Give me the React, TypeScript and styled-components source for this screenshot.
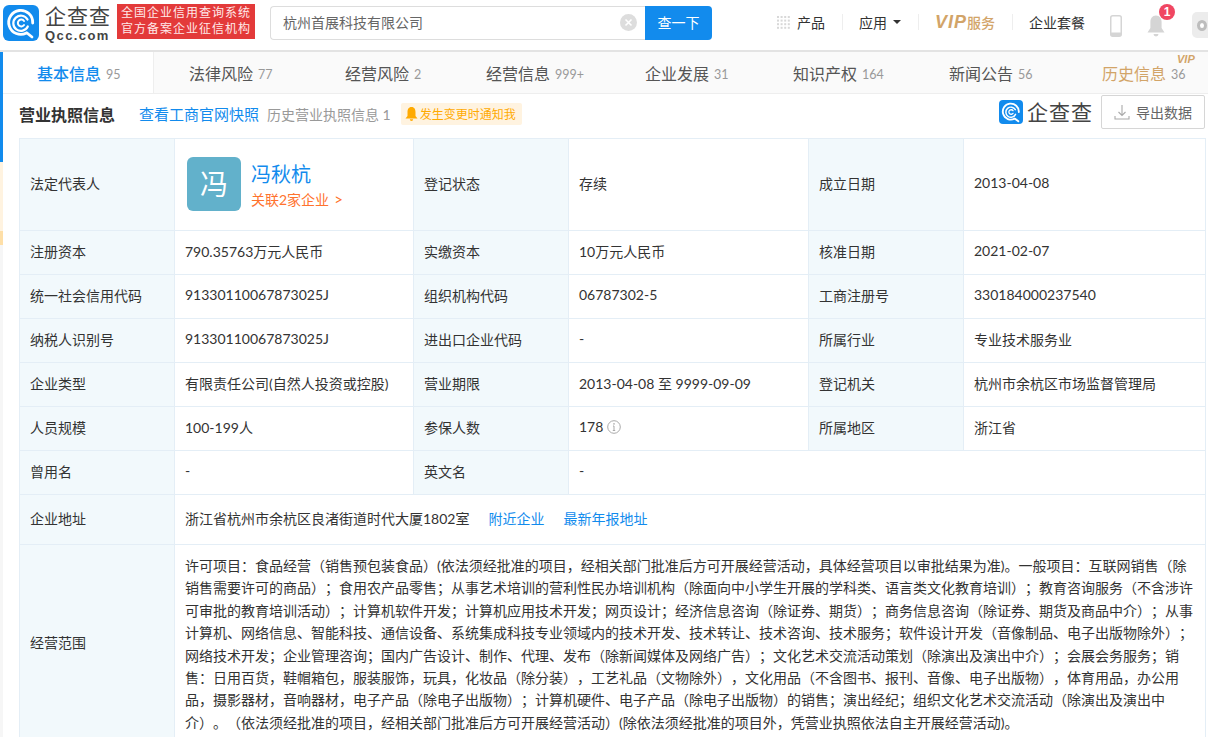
import React from "react";
import styled, { createGlobalStyle } from "styled-components";

const Global = createGlobalStyle`
  html, body { margin: 0; padding: 0; height: 737px; overflow: hidden; background: #fff; }
  body {
    font-family: Lato, "Noto Sans CJK SC", "Liberation Sans", sans-serif; font-size: 14px; color: #333;
    text-spacing-trim: space-all;
  }
  * { box-sizing: border-box; }
`;

const Page = styled.div`width: 1208px; height: 737px; overflow: hidden;`;

const Header = styled.header`
  height: 52px; display: flex; align-items: flex-start; border-bottom: 2px solid #e3e3e3; background: #fff;
`;
const LogoWrap = styled.div`display: flex; align-items: center; margin: 3px 0 0 3px; width: 114px; flex: none;`;
const LogoWords = styled.div`
  margin-left: 6px; display: flex; flex-direction: column; color: #444;
`;
const LogoCn = styled.span`
  font-size: 21px; line-height: 25px; font-weight: 400; letter-spacing: 1px; height: 25px; white-space: nowrap;
`;
const LogoEn = styled.span`
  font-size: 13px; line-height: 13px; font-weight: 700; letter-spacing: 1.4px; font-family: "Liberation Sans", sans-serif; margin-top: 1px; white-space: nowrap;
`;
const RedBanner = styled.div`
  margin-top: 4px; width: 138px; height: 35px; background: #e33a3a; color: #ffe9e9; flex: none;
  font-size: 12px; line-height: 16px; padding-top: 1px; text-align: center; letter-spacing: 1px; white-space: nowrap;
`;
const Search = styled.div`
  margin: 6px 0 0 15px; width: 375px; height: 34px; border: 1px solid #ddd; border-right: 0; border-radius: 4px 0 0 4px; flex: none;
  display: flex; align-items: center; justify-content: space-between; padding: 0 8px 2px 12px; color: #666; font-size: 14px;
`;
const SearchBtn = styled.button`
  margin-top: 6px; width: 67px; height: 34px; background: #128bed; color: #fff; border: 0; border-radius: 0 4px 4px 0; flex: none;
  font: inherit; font-size: 14px; padding: 0 0 2px;
`;
const Nav = styled.nav`
  margin-left: 65px; display: flex; align-items: center; height: 44px; flex: 1; color: #333; font-size: 14px; white-space: nowrap;
`;
const NavItem = styled.div<{ $w: number }>`
  display: flex; align-items: center; gap: 7px; width: ${(p) => p.$w}px; flex: none;
`;
const NavDivider = styled.i`width: 1px; height: 16px; background: #eee; margin-right: 16px; flex: none;`;
const VipMark = styled.span`
  font: italic 700 18px "Liberation Sans", sans-serif; color: #d2a468; letter-spacing: 1px;
`;
const VipServe = styled.span`color: #d2a468; font-weight: 500; font-size: 14px; margin-left: -7px;`;
const Caret = styled.i`
  width: 0; height: 0; border-left: 4px solid transparent; border-right: 4px solid transparent; border-top: 4px solid #333; margin-left: -1px;
`;
const PhoneIcon = styled.svg`margin-top: 8px; flex: none;`;
const BellWrap = styled.div`position: relative; margin: 8px 0 0 25px; width: 18px; height: 24px; flex: none;`;
const Badge = styled.span`
  position: absolute; left: 12px; top: -10px; width: 16px; height: 16px; border-radius: 50%; background: #f04662; color: #fff;
  font: 700 12px/16px "Liberation Sans", sans-serif; text-align: center;
`;
const Avatar = styled.div`
  margin: 6px 0 0 27px; width: 20px; height: 26px; border-radius: 5px 0 0 5px; background: #ececec; position: relative; overflow: hidden; flex: none;
`;
const AvatarEye = styled.i`
  position: absolute; left: 5px; top: 8px; width: 10px; height: 11px; border-radius: 50%; background: #fff; border: 3px solid #bdbdbd;
`;

const Body = styled.div`display: flex; height: 685px;`;
const Strip = styled.div`width: 3px; flex: none; display: flex; flex-direction: column; background: #f6f6f6;`;
const StripPart = styled.i<{ $h: number; $c: string }>`display: block; height: ${(p) => p.$h}px; background: ${(p) => p.$c};`;
const Main = styled.main`flex: 1; min-width: 0;`;

const Tabs = styled.div`
  display: flex; height: 42px; background: #fafafa; border-bottom: 1px solid #eee;
`;
const Tab = styled.div<{ $w?: number; $active?: boolean }>`
  position: relative; display: flex; align-items: center; height: 41px; flex: ${(p) => (p.$w ? "none" : 1)};
  width: ${(p) => p.$w}px; padding-left: ${(p) => (p.$active ? 34 : 35)}px; font-size: 16px; color: #555; white-space: nowrap;
  ${(p) => p.$active && "background:#fff; color:#128bed; border-right:1px solid #eee; font-weight:500;"}
`;
const TabText = styled.span<{ $gold?: boolean }>`${(p) => p.$gold && "color:#d2a468;"}`;
const Count = styled.span`font-size: 12.5px; color: #999; margin: 4px 0 0 5px; font-weight: 400;`;
const TabVip = styled.span`
  position: absolute; left: 110px; top: 1px; font: italic 700 11px "Liberation Sans", sans-serif; color: #d2a468;
`;

const TitleRow = styled.div`
  height: 44px; display: flex; align-items: center; padding: 0 3px 5px 16px;
`;
const Title = styled.h3`margin: 0; font-size: 16px; font-weight: 700; color: #333; margin-right: 24px;`;
const BlueLink = styled.a`color: #128bed; font-size: 15px; text-decoration: none;`;
const MutedText = styled.span`color: #999; font-size: 14px; margin-left: 8px;`;
const Notify = styled.span`
  margin-left: 10px; height: 22px; width: 121px; display: flex; align-items: center; gap: 2px; padding-left: 4px;
  background: #fff3e0; border-radius: 2px; color: #ffaa00; font-size: 12px; white-space: nowrap;
`;
const RightTools = styled.div`margin: -3px 0 0 auto; display: flex; align-items: center;`;
const SmallLogoText = styled.span`
  font-size: 21px; font-weight: 400; color: #444; margin-left: 4px; letter-spacing: 1px; line-height: 24px; height: 24px;
`;
const ExportBtn = styled.button`
  margin-left: 8px; width: 104px; height: 34px; background: #fff; border: 1px solid #d6d6d6; border-radius: 2px; color: #666;
  display: flex; align-items: center; justify-content: center; gap: 6px; font: inherit; font-size: 14px; padding: 0;
`;

const TableWrap = styled.div`padding-left: 16px;`;
const Table = styled.table`
  border-collapse: collapse; table-layout: fixed; width: 1186px; font-size: 14px; color: #333;
`;
const Row = styled.tr<{ $h: number }>`height: ${(p) => p.$h}px;`;
const Label = styled.td`
  background: #f2f9fc; border: 1px solid #e4eef6; padding: 0 10px 4px; vertical-align: middle;
`;
const Value = styled.td`
  border: 1px solid #e4eef6; padding: 0 10px 4px; vertical-align: middle; background: #fff;
`;
const ScopeValue = styled(Value)`
  padding: 10px 10px 0; line-height: 22.4px; vertical-align: top;
`;
const Person = styled.div`display: flex; align-items: center; padding-left: 2px; margin-top: 2px;`;
const PersonBox = styled.div`
  width: 54px; height: 54px; border-radius: 6px; background: #62b1cb; color: #fff; font-size: 28px; line-height: 54px; text-align: center;
`;
const PersonInfo = styled.div`margin-left: 10px; padding-top: 4px; display: flex; flex-direction: column;`;
const PersonName = styled.a`color: #128bed; font-size: 20px; line-height: 28px;`;
const PersonLink = styled.a`color: #ff722d; font-size: 14px; line-height: 22px;`;
const LinkArrow = styled.span`margin-left: 5px; font-size: 15px;`;
const AddrLink = styled(BlueLink)`font-size: 14px; margin-left: 19px;`;
const InfoIcon = styled.svg`vertical-align: -2px; margin-left: 4px;`;

function QccIcon({ size }: { size: number }) {
  return (
    <svg width={size} height={size} viewBox="0 0 36 36">
      <rect width="36" height="36" rx="6" fill="#128bed" />
      <path d="M26.5 25.5A12 12 0 1 1 29 14" fill="none" stroke="#fff" strokeWidth="2.8" strokeLinecap="round" transform="rotate(20 18 18)" />
      <path d="M24 28l5 4" stroke="#fff" strokeWidth="2.8" strokeLinecap="round" />
      <path d="M24.5 14.5A7.6 7.6 0 1 0 24.8 21.5" fill="none" stroke="#fff" strokeWidth="2.2" strokeLinecap="round" />
      <path d="M21 16a3.4 3.4 0 1 0 0 4" fill="none" stroke="#fff" strokeWidth="2" strokeLinecap="round" />
    </svg>
  );
}

const cells: [string, React.ReactNode, string, React.ReactNode, string, React.ReactNode][] = [
  ["注册资本", "790.35763万元人民币", "实缴资本", "10万元人民币", "核准日期", "2021-02-07"],
  ["统一社会信用代码", "91330110067873025J", "组织机构代码", "06787302-5", "工商注册号", "330184000237540"],
  ["纳税人识别号", "91330110067873025J", "进出口企业代码", "-", "所属行业", "专业技术服务业"],
  ["企业类型", "有限责任公司(自然人投资或控股)", "营业期限", "2013-04-08 至 9999-09-09", "登记机关", "杭州市余杭区市场监督管理局"],
  [
    "人员规模",
    "100-199人",
    "参保人数",
    <>
      178
      <InfoIcon width="14" height="14" viewBox="0 0 14 14">
        <circle cx="7" cy="7" r="6.3" fill="none" stroke="#aaa" />
        <path d="M7 6v4.5M5.8 10.5h2.4M6 6h1" stroke="#aaa" fill="none" />
        <circle cx="7" cy="3.9" r=".8" fill="#aaa" />
      </InfoIcon>
    </>,
    "所属地区",
    "浙江省",
  ],
];

const scope =
  "许可项目：食品经营（销售预包装食品）(依法须经批准的项目，经相关部门批准后方可开展经营活动，具体经营项目以审批结果为准)。一般项目：互联网销售（除销售需要许可的商品）；食用农产品零售；从事艺术培训的营利性民办培训机构（除面向中小学生开展的学科类、语言类文化教育培训）；教育咨询服务（不含涉许可审批的教育培训活动）；计算机软件开发；计算机应用技术开发；网页设计；经济信息咨询（除证券、期货）；商务信息咨询（除证券、期货及商品中介）；从事计算机、网络信息、智能科技、通信设备、系统集成科技专业领域内的技术开发、技术转让、技术咨询、技术服务；软件设计开发（音像制品、电子出版物除外）；网络技术开发；企业管理咨询；国内广告设计、制作、代理、发布（除新闻媒体及网络广告）；文化艺术交流活动策划（除演出及演出中介）；会展会务服务；销售：日用百货，鞋帽箱包，服装服饰，玩具，化妆品（除分装），工艺礼品（文物除外），文化用品（不含图书、报刊、音像、电子出版物），体育用品，办公用品，摄影器材，音响器材，电子产品（除电子出版物）；计算机硬件、电子产品（除电子出版物）的销售；演出经纪；组织文化艺术交流活动（除演出及演出中介）。（依法须经批准的项目，经相关部门批准后方可开展经营活动）(除依法须经批准的项目外，凭营业执照依法自主开展经营活动)。";

const tabs: { t: string; c: string; w?: number; gold?: boolean }[] = [
  { t: "法律风险", c: "77", w: 156 },
  { t: "经营风险", c: "2", w: 141 },
  { t: "经营信息", c: "999+", w: 159 },
  { t: "企业发展", c: "31", w: 148 },
  { t: "知识产权", c: "164", w: 156 },
  { t: "新闻公告", c: "56", w: 153 },
  { t: "历史信息", c: "36", gold: true },
];

export default function App() {
  return (
    <Page>
      <Global />
      <Header>
        <LogoWrap>
          <QccIcon size={36} />
          <LogoWords>
            <LogoCn>企查查</LogoCn>
            <LogoEn>Qcc.com</LogoEn>
          </LogoWords>
        </LogoWrap>
        <RedBanner>
          全国企业信用查询系统
          <br />
          官方备案企业征信机构
        </RedBanner>
        <Search>
          杭州首展科技有限公司
          <svg width="17" height="17" viewBox="0 0 17 17">
            <circle cx="8.5" cy="8.5" r="8.5" fill="#ddd" />
            <path d="M5.5 5.5l6 6M11.500 5.500l-6 6" stroke="#fff" strokeWidth="1.6" />
          </svg>
        </Search>
        <SearchBtn>查一下</SearchBtn>
        <Nav>
          <NavItem $w={65}>
            <svg width="13" height="13" viewBox="0 0 13 13" fill="#d8d8d8">
              {[0, 1, 2, 3].flatMap((r) =>
                [0, 1, 2, 3].map((c) => <rect key={`${r}${c}`} x={c * 3.6} y={r * 3.6} width="2" height="2" />),
              )}
            </svg>
            产品
          </NavItem>
          <NavDivider />
          <NavItem $w={59}>
            应用
            <Caret />
          </NavItem>
          <NavDivider />
          <NavItem $w={77}>
            <VipMark>VIP</VipMark>
            <VipServe>服务</VipServe>
          </NavItem>
          <NavDivider />
          <NavItem $w={81}>企业套餐</NavItem>
          <PhoneIcon width="12" height="22" viewBox="0 0 12 22">
            <rect x="0.75" y="0.75" width="10.5" height="20.5" rx="2" fill="none" stroke="#d5d5d5" strokeWidth="1.5" />
            <rect x="1" y="17.5" width="10" height="3.5" fill="#d5d5d5" />
          </PhoneIcon>
          <BellWrap>
            <svg width="18" height="24" viewBox="0 0 18 24" fill="#d5d5d5">
              <path d="M9 1.500c-3.800 0-5.600 3-5.600 6.500v6L.5 18.500h17L14.600 14V8c0-3.500-1.800-6.500-5.600-6.500z" />
              <path d="M6.500 20h5a2.500 2.500 0 0 1-5 0z" />
            </svg>
            <Badge>1</Badge>
          </BellWrap>
          <Avatar>
            <AvatarEye />
          </Avatar>
        </Nav>
      </Header>
      <Body>
        <Strip>
          <StripPart $h={110} $c="#128bed" />
          <StripPart $h={69} $c="#fff3e0" />
          <StripPart $h={14} $c="#fedfa8" />
        </Strip>
        <Main>
          <Tabs>
            <Tab $w={151} $active>
              基本信息<Count>95</Count>
            </Tab>
            {tabs.map((x) => (
              <Tab key={x.t} $w={x.w}>
                <TabText $gold={x.gold}>{x.t}</TabText>
                <Count>{x.c}</Count>
                {x.gold && <TabVip>VIP</TabVip>}
              </Tab>
            ))}
          </Tabs>
          <TitleRow>
            <Title>营业执照信息</Title>
            <BlueLink>查看工商官网快照</BlueLink>
            <MutedText>历史营业执照信息 1</MutedText>
            <Notify>
              <svg width="13" height="14" viewBox="0 0 13 14" fill="#ffaa00">
                <path d="M6.500 0C3.500 0 2.500 2.500 2.500 5v4L.5 11.500h12L10.500 9V5c0-2.500-1-5-4-5z" />
                <path d="M4.800 12.300h3.400a1.700 1.700 0 0 1-3.400 0z" />
              </svg>
              发生变更时通知我
            </Notify>
            <RightTools>
              <QccIcon size={24} />
              <SmallLogoText>企查查</SmallLogoText>
              <ExportBtn>
                <svg width="16" height="16" viewBox="0 0 16 16" fill="none" stroke="#aaa" strokeWidth="1.1">
                  <path d="M8 1v10M4.500 8L8 11.500 11.500 8M1 12v3h14v-3" />
                </svg>
                导出数据
              </ExportBtn>
            </RightTools>
          </TitleRow>
          <TableWrap>
            <Table>
              <colgroup>
                <col width="155" />
                <col width="239" />
                <col width="155" />
                <col width="240" />
                <col width="155" />
                <col width="242" />
              </colgroup>
              <tbody>
                <Row $h={92}>
                  <Label>法定代表人</Label>
                  <Value>
                    <Person>
                      <PersonBox>冯</PersonBox>
                      <PersonInfo>
                        <PersonName>冯秋杭</PersonName>
                        <PersonLink>
                          关联2家企业
                          <LinkArrow>&gt;</LinkArrow>
                        </PersonLink>
                      </PersonInfo>
                    </Person>
                  </Value>
                  <Label>登记状态</Label>
                  <Value>存续</Value>
                  <Label>成立日期</Label>
                  <Value>2013-04-08</Value>
                </Row>
                {cells.map((r) => (
                  <Row $h={44} key={r[0]}>
                    <Label>{r[0]}</Label>
                    <Value>{r[1]}</Value>
                    <Label>{r[2]}</Label>
                    <Value>{r[3]}</Value>
                    <Label>{r[4]}</Label>
                    <Value>{r[5]}</Value>
                  </Row>
                ))}
                <Row $h={44}>
                  <Label>曾用名</Label>
                  <Value>-</Value>
                  <Label>英文名</Label>
                  <Value colSpan={3}>-</Value>
                </Row>
                <Row $h={50}>
                  <Label>企业地址</Label>
                  <Value colSpan={5}>
                    浙江省杭州市余杭区良渚街道时代大厦1802室
                    <AddrLink>附近企业</AddrLink>
                    <AddrLink>最新年报地址</AddrLink>
                  </Value>
                </Row>
                <Row $h={198}>
                  <Label>经营范围</Label>
                  <ScopeValue colSpan={5}>{scope}</ScopeValue>
                </Row>
              </tbody>
            </Table>
          </TableWrap>
        </Main>
      </Body>
    </Page>
  );
}
